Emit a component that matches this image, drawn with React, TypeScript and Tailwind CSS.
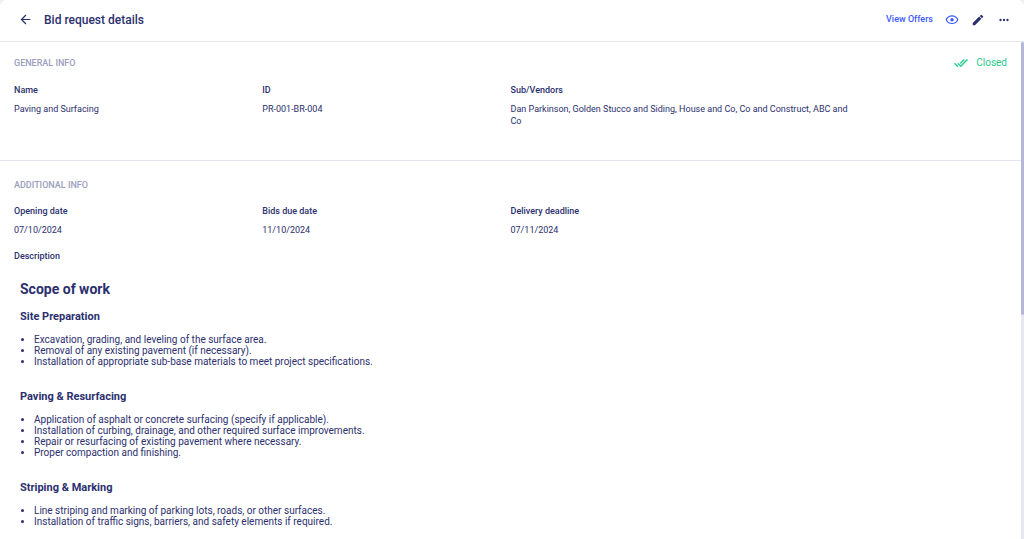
import type { ReactNode } from "react";

const SCOPE = [
  {
    title: "Site Preparation",
    items: [
      "Excavation, grading, and leveling of the surface area.",
      "Removal of any existing pavement (if necessary).",
      "Installation of appropriate sub-base materials to meet project specifications.",
    ],
  },
  {
    title: "Paving & Resurfacing",
    items: [
      "Application of asphalt or concrete surfacing (specify if applicable).",
      "Installation of curbing, drainage, and other required surface improvements.",
      "Repair or resurfacing of existing pavement where necessary.",
      "Proper compaction and finishing.",
    ],
  },
  {
    title: "Striping & Marking",
    items: [
      "Line striping and marking of parking lots, roads, or other surfaces.",
      "Installation of traffic signs, barriers, and safety elements if required.",
    ],
  },
];

export default function App() {
  return (
    <div className="h-screen bg-[#eeeef8] font-['Roboto',sans-serif] text-[#2b2f6e]">
      <div className="flex h-full flex-col overflow-hidden rounded-t-md bg-white">
        <Header />
        <div className="flex min-h-0 flex-1">
          <main className="min-w-0 flex-1 overflow-hidden">
            <GeneralInfo />
            <AdditionalInfo />
          </main>
          <div className="w-[3px] shrink-0 bg-[#e6e7f1]">
            <div className="h-[55%] rounded-xs bg-[#b4b8d6]" />
          </div>
        </div>
      </div>
    </div>
  );
}

function Header() {
  return (
    <header className="flex h-[42px] shrink-0 items-center border-b border-[#e4e5f0] pr-[13px] pb-0.5 pl-5">
      <button type="button" aria-label="Back" className="mr-[13px]">
        <Icon size={11} box="3 3 18 18">
          <path d="M20 11H7.83l5.59-5.59L12 4l-8 8 8 8 1.41-1.41L7.83 13H20v-2z" />
        </Icon>
      </button>
      <h1 className="text-xs font-medium">Bid request details</h1>
      <a href="#offers" className="ml-auto text-[9px] font-medium text-[#3d5afe]">
        View Offers
      </a>
      <button type="button" aria-label="Preview" className="ml-3 text-[#3d5afe]">
        <Icon size={14}>
          <path d="M12 6a9.77 9.77 0 0 1 8.82 5.5 9.82 9.82 0 0 1-17.64 0A9.77 9.77 0 0 1 12 6m0-2C7 4 2.73 7.11 1 11.5 2.73 15.89 7 19 12 19s9.27-3.11 11-7.5C21.27 7.11 17 4 12 4zm0 4.5a3 3 0 0 1 0 6 3 3 0 0 1 0-6z" />
        </Icon>
      </button>
      <button type="button" aria-label="Edit" className="ml-3">
        <Icon size={14}>
          <path d="M3 17.25V21h3.75L17.81 9.94l-3.75-3.75L3 17.25zM20.71 7.04a1 1 0 0 0 0-1.41l-2.34-2.34a1 1 0 0 0-1.41 0l-1.83 1.83 3.75 3.75 1.83-1.83z" />
        </Icon>
      </button>
      <button type="button" aria-label="More" className="ml-3">
        <Icon size={14}>
          <path d="M6 10a2 2 0 1 0 0 4 2 2 0 0 0 0-4zm12 0a2 2 0 1 0 0 4 2 2 0 0 0 0-4zm-6 0a2 2 0 1 0 0 4 2 2 0 0 0 0-4z" />
        </Icon>
      </button>
    </header>
  );
}

function GeneralInfo() {
  return (
    <section className="min-h-[119px] border-b border-[#e4e5f0] pt-[14px] pr-[14px] pl-[14px]">
      <div className="flex items-center justify-between">
        <SectionTitle>GENERAL INFO</SectionTitle>
        <div className="flex items-center gap-2 text-[10px] leading-3 text-[#1fc98b]">
          <Icon size={14}>
            <path
              d="M18 7l-1.41-1.41-6.34 6.34 1.41 1.41L18 7zm4.24-1.41L11.66 16.17 7.48 12l-1.41 1.41L11.66 19l12-12-1.42-1.41zM.41 13.41L6 19l1.41-1.41L1.83 12 .41 13.41z"
              stroke="currentColor"
              strokeWidth="0.6"
            />
          </Icon>
          Closed
        </div>
      </div>
      <dl className="mt-[14px] grid grid-cols-12">
        <Field label="Name">Paving and Surfacing</Field>
        <Field label="ID">PR-001-BR-004</Field>
        <Field label="Sub/Vendors" wide>
          Dan Parkinson, Golden Stucco and Siding, House and Co, Co and
          Construct, ABC and Co
        </Field>
      </dl>
    </section>
  );
}

function AdditionalInfo() {
  return (
    <section className="pt-[18px] pr-[14px] pl-[14px]">
      <SectionTitle>ADDITIONAL INFO</SectionTitle>
      <dl className="mt-[14px] grid grid-cols-12">
        <Field label="Opening date">07/10/2024</Field>
        <Field label="Bids due date">11/10/2024</Field>
        <Field label="Delivery deadline">07/11/2024</Field>
      </dl>
      <h3 className="mt-[14px] text-[9px] leading-3 font-medium">Description</h3>
      <article className="pt-[17px] pl-[6px]">
        <h2 className="text-sm leading-5 font-bold">Scope of work</h2>
        {SCOPE.map((s) => (
          <div key={s.title} className="mb-3">
            <h3 className="pt-[11px] text-[11px] leading-[14px] font-bold">
              {s.title}
            </h3>
            <ul className="mt-[10px] list-disc pl-[14px] text-[10px] leading-[11px]">
              {s.items.map((item) => (
                <li key={item}>{item}</li>
              ))}
            </ul>
          </div>
        ))}
      </article>
    </section>
  );
}

function SectionTitle({ children }: { children: ReactNode }) {
  return (
    <h2 className="text-[9px] leading-3 font-medium text-[#9a9dbd]">{children}</h2>
  );
}

function Field({
  label,
  wide,
  children,
}: {
  label: string;
  wide?: boolean;
  children: ReactNode;
}) {
  return (
    <div className={wide ? "col-span-5 max-w-[344px]" : "col-span-3"}>
      <dt className="text-[9px] leading-3 font-medium">{label}</dt>
      <dd className="mt-[7px] text-[9px] leading-3">{children}</dd>
    </div>
  );
}

function Icon({
  size,
  box = "0 0 24 24",
  children,
}: {
  size: number;
  box?: string;
  children: ReactNode;
}) {
  return (
    <svg width={size} height={size} viewBox={box} fill="currentColor" aria-hidden="true">
      {children}
    </svg>
  );
}
